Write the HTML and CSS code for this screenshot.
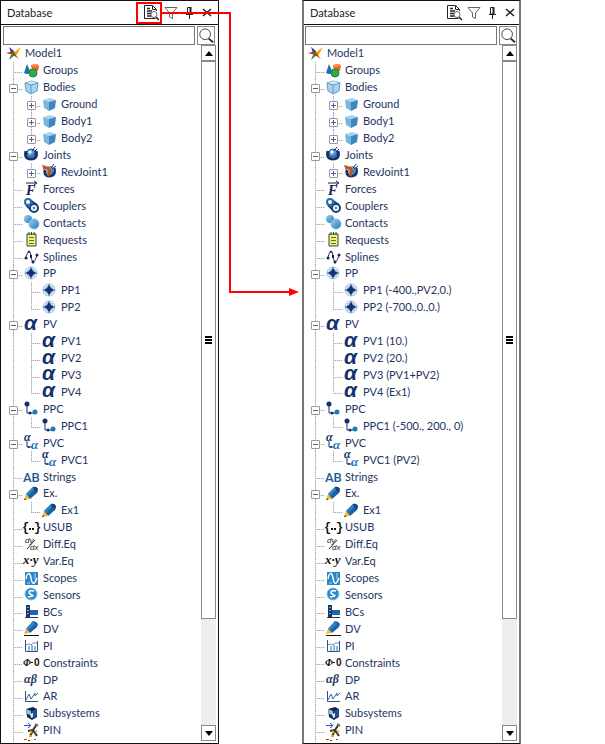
FILE: index.html
```html
<!DOCTYPE html>
<html lang="en">
<head>
    <meta charset="UTF-8">
    <meta name="viewport" content="width=device-width, initial-scale=1.0">
    <title>Database</title>
    <link rel="stylesheet" href="styles.css">
</head>
<body>

    <!-- gradients stop working inside display: none, so they live apart from the symbols -->
    <svg class="gradients" aria-hidden="true">
        <defs>
            <linearGradient id="g-ball" x1="0" y1="0" x2="1" y2="1">
                <stop offset="0" stop-color="#9fd0ef"/><stop offset="1" stop-color="#1f78b8"/>
            </linearGradient>
        </defs>
    </svg>

    <svg class="sprite" aria-hidden="true">
        <symbol id="model" viewBox="0 0 15 15">
            <path d="M3 1 8 5 9 9 5 7Z" fill="#1f3fae"/>
            <path d="M15 1 10 10 7 7Z" fill="#f5a800"/>
            <path d="M0 7 8 5 8 9Z" fill="#e01b1b"/>
            <path d="M7 6 10 8 3 14 5 9Z" fill="#159a3a"/>
            <path d="M8 7 13 13 7 9Z" fill="#d8281c"/>
        </symbol>
        <symbol id="groups" viewBox="0 0 15 15">
            <path d="M3 1 7 10Q4 12 0 10Z" fill="#1c6fb5"/>
            <path d="M7 2 13 1 15 3 14 8 8 9Z" fill="#f0632a"/>
            <path d="M7 2 13 1 15 3 9 4Z" fill="#ff8a4c"/>
            <circle cx="9" cy="10" r="4" fill="#2fae45" stroke="#14863a"/>
        </symbol>
        <symbol id="bodies" viewBox="0 0 15 15">
            <path d="M1 3 8 1 14 3 13 11 7 14 2 11Z" fill="#a9d3ec" stroke="#5d9cc4"/>
            <path d="M1 3 7 5 14 3M7 5V14" fill="none" stroke="#5d9cc4"/>
            <path d="M2 3 8 1 13 3 7 4Z" fill="#d3eaf7"/>
        </symbol>
        <symbol id="body" viewBox="0 0 15 15">
            <path d="M1 3 8 1 14 3 7 5Z" fill="#a5d3ef"/>
            <path d="M1 3 7 5V14L2 11Z" fill="#79b5df"/>
            <path d="M14 3 7 5V14L13 11Z" fill="#3f86ba"/>
        </symbol>
        <symbol id="joints" viewBox="0 0 15 15">
            <path d="M2 4Q0 12 7 12Q14 12 12 4" fill="none" stroke="#14306e" stroke-width="3"/>
            <circle cx="7" cy="6" r="4" fill="url(#g-ball)" stroke="#1d5796"/>
            <path d="M8 4 11 0M10 5 13 2" stroke="#14306e"/>
            <circle cx="6" cy="5" r="1.5" fill="#fff"/>
        </symbol>
        <symbol id="revjoint" viewBox="0 0 15 15">
            <path d="M3 6Q2 12 7 12Q14 12 12 4" fill="none" stroke="#14306e" stroke-width="3"/>
            <circle cx="8" cy="6" r="4" fill="url(#g-ball)"/>
            <path d="M9 4 12 0M10 5 14 2" stroke="#14306e"/>
            <path d="M2 4Q7 3 8 7L6 12" fill="none" stroke="#c2541b" stroke-width="3"/>
            <path d="M0 1 4 2 2 7Z" fill="#c2541b"/>
        </symbol>
        <symbol id="forces" viewBox="0 0 15 15">
            <text x="2" y="14" class="glyph serif" font-size="14" fill="#14224f">F</text>
            <path d="M2 2H12M10 0 13 2 10 4" fill="none" stroke="#14224f"/>
        </symbol>
        <symbol id="couplers" viewBox="0 0 15 15">
            <path d="M6 2 13 7M2 7 8 13" stroke="#14407c" stroke-width="2"/>
            <circle cx="4" cy="4" r="3" fill="#fff" stroke="#2a6ca8" stroke-width="2"/>
            <circle cx="10" cy="10" r="4" fill="#fff" stroke="#14407c" stroke-width="2"/>
            <circle cx="10" cy="10" r="1" fill="none" stroke="#2a6ca8"/>
        </symbol>
        <symbol id="contacts" viewBox="0 0 15 15">
            <circle cx="4" cy="4" r="4" fill="url(#g-ball)"/>
            <circle cx="10" cy="9" r="5" fill="url(#g-ball)" stroke="#7fb8dd"/>
        </symbol>
        <symbol id="requests" viewBox="0 0 15 15">
            <path d="M3 2H12V14H3Z" fill="#eef27a" stroke="#2d4b45"/>
            <path d="M5 0V3M7.5 0V3M10 0V3" stroke="#2d4b45"/>
            <path d="M5 5.5H10M5 8.5H10M5 11.5H10" stroke="#5f7030"/>
        </symbol>
        <symbol id="splines" viewBox="0 0 15 15">
            <path d="M2 9C4 0 6 0 7 7S10 16 13 6" fill="none" stroke="#14224f"/>
            <circle cx="2" cy="9" r="1.5" fill="#14224f"/><circle cx="5" cy="3" r="1" fill="#14224f"/>
            <circle cx="9" cy="13" r="1.5" fill="#14224f"/><circle cx="13" cy="6" r="1.5" fill="#14224f"/>
            <path d="M7 6V9" stroke="#14224f" stroke-width="2"/>
        </symbol>
        <symbol id="pp" viewBox="0 0 15 15">
            <circle cx="7" cy="7" r="6" fill="#e3f1fa" stroke="#8fc1e4"/>
            <circle cx="7" cy="7" r="4" fill="none" stroke="#8fb6d6"/>
            <path d="M7 1V13M1 7H13" stroke="#4d7cab"/>
            <path d="M7 2 9 5 12 7 9 9 7 12 5 9 2 7 5 5Z" fill="#14306e"/>
        </symbol>
        <symbol id="pv" viewBox="0 0 15 15">
            <text x="0" y="13" class="glyph sans" font-size="21" fill="#14306e">α</text>
        </symbol>
        <symbol id="ppc" viewBox="0 0 15 15">
            <path d="M3 3V12H11" fill="none" stroke="#14306e"/>
            <circle cx="3" cy="3" r="2.5" fill="#14306e"/>
            <circle cx="6" cy="12" r="1.5" fill="#14306e"/>
            <circle cx="11" cy="11" r="2.5" fill="#1f78b8"/>
        </symbol>
        <symbol id="pvc" viewBox="0 0 15 15">
            <path d="M3 6V12H8" fill="none" stroke="#14306e"/>
            <circle cx="5" cy="12" r="1" fill="#14306e"/>
            <text x="0" y="6" class="glyph serif" font-size="12" fill="#14306e">α</text>
            <text x="7" y="14" class="glyph serif" font-size="13" fill="#1f78b8">α</text>
        </symbol>
        <symbol id="strings" viewBox="0 0 15 15">
            <text x="-1" y="13" class="plain" font-size="13" fill="#1b5c94">AB</text>
        </symbol>
        <symbol id="ex" viewBox="0 0 15 15">
            <path d="M9 1Q12 0 14 3L13 7 6 13 2 8Z" fill="#1763a6"/>
            <path d="M9 1 2 8 4 10 11 3Z" fill="#2f83c4"/>
            <path d="M9 1Q12 0 14 3L13 7 10 4Z" fill="#154879"/>
            <path d="M2 8 6 13 0 14Z" fill="#f7b733"/>
            <path d="M0 14 1 12 2 14Z" fill="#5a3a10"/>
        </symbol>
        <symbol id="usub" viewBox="0 0 15 15">
            <text x="-2" y="11" class="mono" font-size="12" fill="#111">{</text>
            <text x="10" y="11" class="mono" font-size="12" fill="#111">}</text>
            <path d="M5 8H7V10H5ZM8 8H10V10H8Z" fill="#111"/>
        </symbol>
        <symbol id="diff" viewBox="0 0 15 15">
            <text x="1" y="6" class="small" font-size="8">dy</text>
            <text x="6" y="13" class="small" font-size="8">dx</text>
            <path d="M3 12 11 3" stroke="#333"/>
        </symbol>
        <symbol id="var" viewBox="0 0 15 15">
            <text x="-1" y="10" class="glyph serif" font-size="13" fill="#111">x·y</text>
        </symbol>
        <symbol id="scopes" viewBox="0 0 15 15">
            <path d="M1 1H14V14H1Z" fill="#2a86c4"/>
            <path d="M2 8C3 1 6 1 7 7S10 15 13 7" fill="none" stroke="#fff" stroke-width="1.5"/>
            <path d="M11 2V8M3 12H6" stroke="#a9d6f2"/>
        </symbol>
        <symbol id="sensors" viewBox="0 0 15 15">
            <circle cx="7" cy="7" r="6" fill="#2a8bcb" stroke="#7cbde6"/>
            <path d="M10 4Q5 3 5 5T8 8T4 10" fill="none" stroke="#fff" stroke-width="1.5"/>
        </symbol>
        <symbol id="bcs" viewBox="0 0 15 15">
            <path d="M2 1H6V14H2Z" fill="#17376f"/>
            <path d="M6 6H14V11H6Z" fill="#2466a5"/>
            <path d="M1 13.5H14" stroke="#17376f"/>
            <path d="M3 3.5H5M3 6.5H5M3 9.5H5" stroke="#7ea8d2"/>
        </symbol>
        <symbol id="dv" viewBox="0 0 15 15">
            <path d="M9 0Q12 0 14 3L13 6 6 12 2 8Z" fill="#1763a6"/>
            <path d="M9 0 2 8 4 10 11 3Z" fill="#2f83c4"/>
            <path d="M2 8 6 12 0 13Z" fill="#f7b733"/>
            <path d="M0 14.5H15" stroke="#111"/>
        </symbol>
        <symbol id="pi" viewBox="0 0 15 15">
            <path d="M1.5 2V13.5H13.5V3" fill="none" stroke="#2b5486"/>
            <path d="M5 13V8M8 13V7M11 13V8" stroke="#2b6fb0"/>
            <path d="M2 7 5 6 7 7 9 5 13 5" fill="none" stroke="#7a8ea6"/>
        </symbol>
        <symbol id="constraints" viewBox="0 0 15 15">
            <text x="-1" y="11" class="glyph serif" font-size="10" fill="#111">Φ</text>
            <path d="M7 7.5H9" stroke="#111"/>
            <text x="10" y="11" class="bold" font-size="10" fill="#111">0</text>
        </symbol>
        <symbol id="dp" viewBox="0 0 15 15">
            <text x="0" y="11" class="glyph serif" font-size="12" fill="#24365f">αβ</text>
        </symbol>
        <symbol id="ar" viewBox="0 0 15 15">
            <path d="M1.5 2V12.5H14" fill="none" stroke="#2b5486"/>
            <path d="M2 11 5 5 7 10 11 4 11 7 14 4" fill="none" stroke="#3b6698"/>
        </symbol>
        <symbol id="subsystems" viewBox="0 0 15 15">
            <path d="M2 3 9 1 13 3V11L8 14 3 11Z" fill="#14264f"/>
            <path d="M2 3 7 5V9L3 8Z" fill="#8fbfe2"/>
            <path d="M8 5 13 3V10L8 13Z" fill="#1e4f8e"/>
            <path d="M6 8 9 7V11L7 12Z" fill="#d6e9f6"/>
        </symbol>
        <symbol id="pin" viewBox="0 0 15 15">
            <path d="M0 2.5H6M4 0 7 2.5 4 5" fill="none" stroke="#2b50c8"/>
            <path d="M13 1 9 7 4 8M9 7 13 13M9 8 6 13" fill="none" stroke="#333" stroke-width="2"/>
            <path d="M6 8 8 10M11 9 13 8M5 13H8" stroke="#f0a020" stroke-width="2"/>
            <path d="M11 1 14 3" stroke="#777" stroke-width="2"/>
        </symbol>
        <symbol id="more" viewBox="0 0 15 15">
            <path d="M0 .5H3M10 .5H12" stroke="#d8281c"/>
            <path d="M4 1.5H6" stroke="#333"/>
        </symbol>
        <symbol id="details" viewBox="0 0 16 16">
            <path d="M12.5 13.5H1.5V.5H9.5L13.5 4.5V6" fill="none" stroke="#222"/>
            <path d="M9.5 1V4.5H13" fill="none" stroke="#222"/>
            <path d="M4 3.5H7M4 6H9M4 8.5H8M4 11H9" stroke="#222" stroke-width="1.5"/>
            <circle cx="11" cy="9.5" r="3" fill="#fff" stroke="#666"/>
            <path d="M13 12 16 15" stroke="#222" stroke-width="1.5"/>
        </symbol>
        <symbol id="funnel" viewBox="0 0 14 14">
            <path d="M1 1.5H13L8.5 7V12.5L5.5 11V7Z" fill="none" stroke="#666"/>
        </symbol>
        <symbol id="thumbtack" viewBox="0 0 14 14">
            <path d="M5.5 1.5H8.5V8H5.5ZM4 8.5H11M7.5 8V13" fill="#fff" stroke="#222"/>
            <path d="M8.5 1V8" stroke="#222" stroke-width="2"/>
        </symbol>
        <symbol id="close" viewBox="0 0 14 14">
            <path d="M3 3 11 10M11 3 3 10" stroke="#222" stroke-width="1.5"/>
        </symbol>
        <symbol id="search" viewBox="0 0 18 18">
            <circle cx="8" cy="7" r="6" fill="#fff" stroke="#333"/>
            <path d="M12 12 17 16" stroke="#222" stroke-width="2"/>
        </symbol>
    </svg>

    <main class="compare">
        <section class="panel" data-values="off"></section>
        <section class="panel detailed" data-values="on"></section>
    </main>

    <script>
        // [level, icon, name, value, "open" | "closed"]
        const items = [
            [0, "model", "Model1"],
            [1, "groups", "Groups"],
            [1, "bodies", "Bodies", "", "open"],
            [2, "body", "Ground", "", "closed"],
            [2, "body", "Body1", "", "closed"],
            [2, "body", "Body2", "", "closed"],
            [1, "joints", "Joints", "", "open"],
            [2, "revjoint", "RevJoint1", "", "closed"],
            [1, "forces", "Forces"],
            [1, "couplers", "Couplers"],
            [1, "contacts", "Contacts"],
            [1, "requests", "Requests"],
            [1, "splines", "Splines"],
            [1, "pp", "PP", "", "open"],
            [2, "pp", "PP1", "(-400.,PV2,0.)"],
            [2, "pp", "PP2", "(-700.,0.,0.)"],
            [1, "pv", "PV", "", "open"],
            [2, "pv", "PV1", "(10.)"],
            [2, "pv", "PV2", "(20.)"],
            [2, "pv", "PV3", "(PV1+PV2)"],
            [2, "pv", "PV4", "(Ex1)"],
            [1, "ppc", "PPC", "", "open"],
            [2, "ppc", "PPC1", "(-500., 200., 0)"],
            [1, "pvc", "PVC", "", "open"],
            [2, "pvc", "PVC1", "(PV2)"],
            [1, "strings", "Strings"],
            [1, "ex", "Ex.", "", "open"],
            [2, "ex", "Ex1"],
            [1, "usub", "USUB"],
            [1, "diff", "Diff.Eq"],
            [1, "var", "Var.Eq"],
            [1, "scopes", "Scopes"],
            [1, "sensors", "Sensors"],
            [1, "bcs", "BCs"],
            [1, "dv", "DV"],
            [1, "pi", "PI"],
            [1, "constraints", "Constraints"],
            [1, "dp", "DP"],
            [1, "ar", "AR"],
            [1, "subsystems", "Subsystems"],
            [1, "pin", "PIN"]
        ];

        function icon(name, cls) {
            return `<svg class="${cls}" aria-hidden="true"><use href="#${name}"/></svg>`;
        }

        function row(item, i, showValues) {
            const [level, img, name, value, state] = item;
            const next = items[i + 1];
            let cells = "";
            if (level === 2) cells += '<span class="cell"></span>';
            if (level > 0) {
                const last = level === 2 && (!next || next[0] < 2);
                const box = state ? `<button type="button" class="expander ${state}" aria-label="${name}"></button>` : "";
                cells += `<span class="cell branch${last ? " last" : ""}">${box}</span>`;
            }
            const text = showValues && value ? `${name} ${value}` : name;
            return `<li class="row level-${level}">${cells}${icon(img, "icon")}<span class="name">${text}</span></li>`;
        }

        function panel(showValues) {
            const arrow = `<svg class="arrow" aria-hidden="true">
                <path class="line" d="M0 11H68V290H130"/><path class="head" d="M127 286 137 290 127 294Z"/></svg>`;
            return `
                <header class="titlebar">
                    <h2 class="title">Database</h2>
                    <div class="tool-mark">
                        <button type="button" class="tool details" aria-label="Show values">${icon("details", "details-icon")}</button>
                        ${showValues ? "" : arrow}
                    </div>
                    <button type="button" class="tool" aria-label="Filter">${icon("funnel", "tool-icon")}</button>
                    <button type="button" class="tool" aria-label="Pin">${icon("thumbtack", "tool-icon")}</button>
                    <button type="button" class="tool" aria-label="Close">${icon("close", "tool-icon")}</button>
                </header>
                <div class="search">
                    <input type="text" class="search-box" aria-label="Search">
                    <button type="button" class="search-button" aria-label="Find">${icon("search", "search-icon")}</button>
                </div>
                <div class="content">
                    <ul class="tree">
                        ${items.map((item, i) => row(item, i, showValues)).join("")}
                        <li class="row clipped"><span class="cell branch"></span>${icon("more", "icon")}</li>
                    </ul>
                    <div class="scrollbar">
                        <button type="button" class="scroll-button up" aria-label="Scroll up"></button>
                        <div class="track"><div class="thumb"><span class="grip"></span></div></div>
                        <button type="button" class="scroll-button down" aria-label="Scroll down"></button>
                    </div>
                </div>`;
        }

        document.querySelectorAll(".panel").forEach(el => {
            el.innerHTML = panel(el.dataset.values === "on");
        });
    </script>

</body>
</html>
```
FILE: styles.css
```css
* {
    box-sizing: border-box;
}

body {
    margin: 0;
    background: #fff;
    color: #24345f;
    font-family: Lato, "Open Sans", sans-serif;
    font-size: 11px;
    line-height: 16px;
}

button {
    margin: 0;
    padding: 0;
    border: 0;
    background: none;
}

.gradients {
    position: absolute;
    width: 0;
    height: 0;
}

.sprite {
    display: none;
}

symbol {
    overflow: visible;
}

.compare {
    display: grid;
    grid-template-columns: 219fr 219fr;
    column-gap: 83px;
    padding-right: 84px;
    height: 100vh;
}

.panel {
    display: flex;
    flex-direction: column;
    min-width: 0;
    border: 1px solid #111;
}

.detailed {
    border-left: 2px solid #777;
    border-right: 2px solid #777;
}

/* title bar */
.titlebar {
    display: flex;
    align-items: center;
    flex: none;
    height: 24px;
    padding-right: 2px;
    border-bottom: 1px solid #111;
}

.title {
    flex: 1;
    margin: 0;
    padding-left: 6px;
    color: #222;
    font-size: 11px;
    font-weight: normal;
}

.detailed .titlebar {
    padding-right: 0;
}

.tool {
    display: flex;
    align-items: center;
    justify-content: center;
    width: 18px;
    height: 22px;
}

.tool-icon {
    width: 14px;
    height: 14px;
}

.tool-mark {
    position: relative;
}

.details {
    width: 26px;
    padding-left: 4px;
    border: 2px solid transparent;
}

.panel:not(.detailed) .details {
    border-color: #f00;
}

.details-icon {
    flex: none;
    width: 16px;
    height: 16px;
}

.arrow {
    position: absolute;
    top: 0;
    left: 100%;
    width: 138px;
    height: 296px;
    pointer-events: none;
}

.line {
    fill: none;
    stroke: #f00;
    stroke-width: 2;
}

.head {
    fill: #f00;
}

/* search */
.search {
    display: flex;
    flex: none;
    gap: 2px;
    height: 20px;
    padding: 1px 3px 0 2px;
}

.detailed .search {
    padding-right: 2px;
    padding-left: 1px;
}

.search-box {
    flex: 1;
    min-width: 0;
    padding: 0 4px;
    border: 1px solid #777;
    font: inherit;
}

.search-button {
    width: 18px;
    border: 1px solid #888;
}

.search-icon {
    display: block;
    width: 16px;
    height: 16px;
}

/* tree */
.content {
    display: flex;
    flex: 1;
    min-height: 0;
}

.tree {
    display: flex;
    flex: 1;
    flex-direction: column;
    min-width: 0;
    margin: 0;
    padding: 0 0 1px 3px;
    overflow: hidden;
    list-style: none;
}

.detailed .tree {
    padding-left: 2px;
}

.row {
    display: flex;
    flex: 1 1 0;
    align-items: center;
    min-height: 0;
    white-space: nowrap;
}

.level-0 {
    padding-left: 2px;
}

.clipped {
    flex: none;
    align-items: flex-start;
    height: 3px;
    overflow: hidden;
}

.cell {
    display: flex;
    flex: none;
    align-items: center;
    align-self: stretch;
    width: 18px;
    background: repeating-linear-gradient(#aaa 0 1px, #e4e4e4 1px 2px) 9px 0 / 1px 100% no-repeat;
}

.branch {
    width: 20px;
    background:
        repeating-linear-gradient(#aaa 0 1px, #e4e4e4 1px 2px) 9px 0 / 1px 100% no-repeat,
        repeating-linear-gradient(90deg, #aaa 0 1px, #e4e4e4 1px 2px) 9px 10px / 10px 1px no-repeat;
}

.last {
    background-size: 1px 10px, 10px 1px;
}

.expander {
    width: 9px;
    height: 9px;
    margin: 3px 0 0 5px;
    border: 1px solid #999;
    border-radius: 1px;
    background: linear-gradient(#3f62a8, #3f62a8) center / 5px 1px no-repeat #fff;
}

.closed {
    background:
        linear-gradient(#3f62a8, #3f62a8) center / 5px 1px no-repeat,
        linear-gradient(#3f62a8, #3f62a8) center / 1px 5px no-repeat #fff;
}

.icon {
    flex: none;
    width: 15px;
    height: 15px;
    overflow: visible;
}

.name {
    padding-left: 4px;
}

.glyph {
    font-style: italic;
    font-weight: bold;
}

.serif {
    font-family: "Liberation Serif", serif;
}

.sans {
    font-family: "Liberation Sans", sans-serif;
}

.plain {
    font-family: Roboto, sans-serif;
    font-weight: 500;
}

.mono {
    font-family: "Liberation Mono", monospace;
    font-weight: bold;
}

.small {
    font-family: "Liberation Sans", sans-serif;
    font-style: italic;
    fill: #222;
}

.bold {
    font-family: "Liberation Sans", sans-serif;
    font-weight: bold;
}

/* scrollbar */
.scrollbar {
    display: flex;
    flex: none;
    flex-direction: column;
    width: 15px;
    margin: 0 2px 2px 0;
}

.scroll-button {
    display: flex;
    align-items: center;
    justify-content: center;
    flex: none;
    height: 16px;
    border: 1px solid #888;
}

.scroll-button::before {
    content: "";
    border: 4px solid transparent;
}

.up::before {
    border-top: 0;
    border-bottom: 5px solid #000;
}

.down::before {
    border-top: 5px solid #000;
    border-bottom: 0;
}

.track {
    flex: 1;
    background: #eee;
}

.thumb {
    display: flex;
    align-items: center;
    justify-content: center;
    height: 84%;
    border: 1px solid #888;
    background: #fff;
}

.grip {
    width: 7px;
    height: 8px;
    background: repeating-linear-gradient(#000 0 2px, #fff 2px 3px);
}
```
